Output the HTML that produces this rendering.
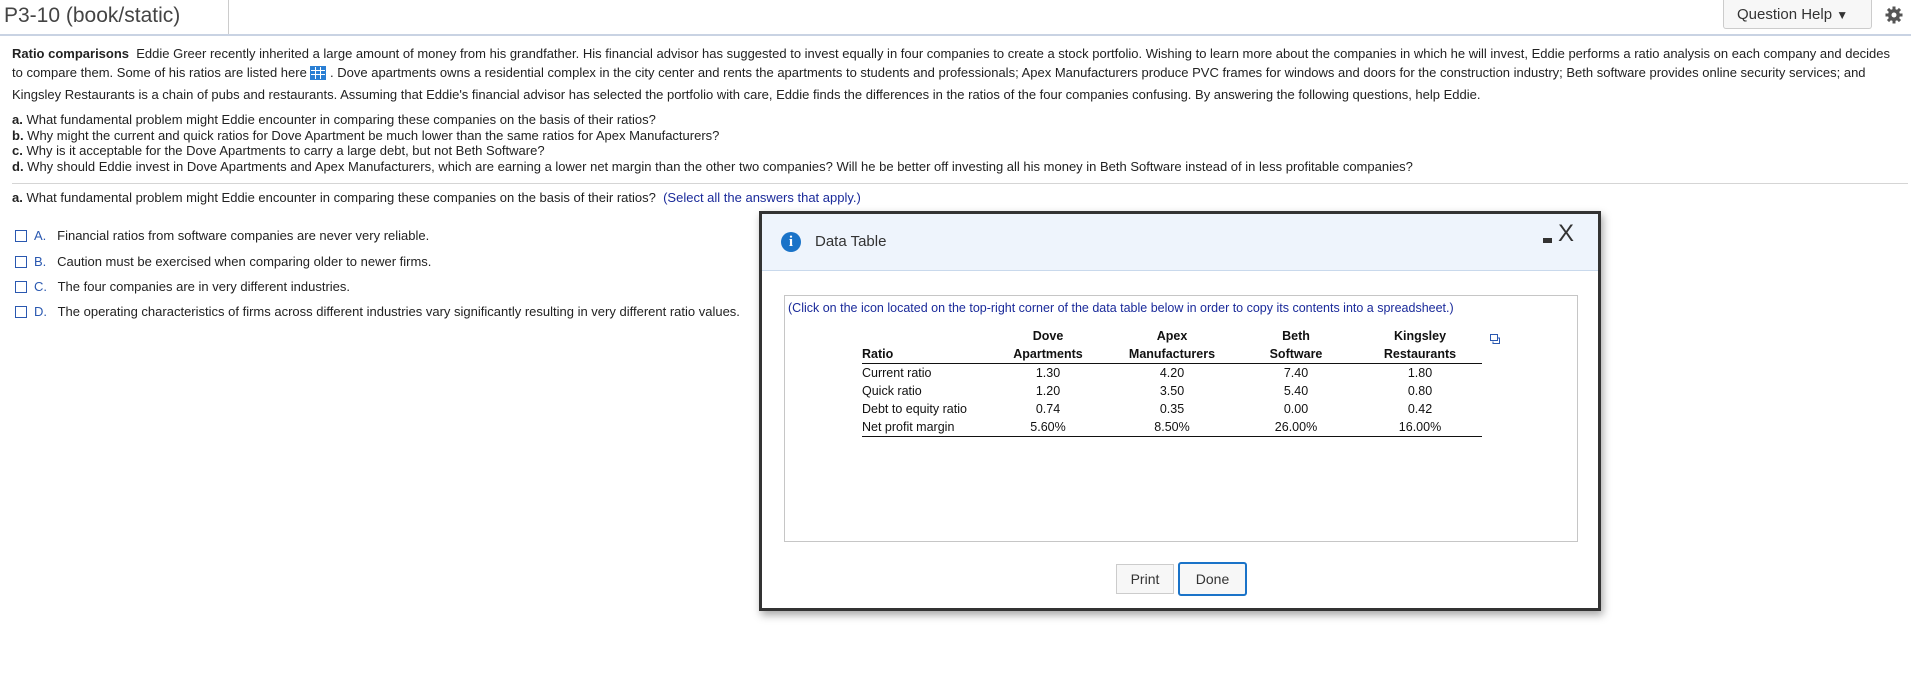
<!DOCTYPE html>
<html><head><meta charset="utf-8"><style>
*{margin:0;padding:0;box-sizing:border-box}
body{width:1911px;height:689px;background:#fff;font-family:"Liberation Sans",Arial,sans-serif;color:#222;position:relative;overflow:hidden;font-size:13px}
.a{position:absolute;white-space:nowrap}
b{font-weight:bold}
.hdr{position:absolute;left:0;top:34px;width:1911px;height:2px;background:#c9d3e3}
.sep{position:absolute;left:12px;width:1896px;height:1px;background:#d5d5d5}
.cb{position:absolute;left:15px;width:12px;height:12px;border:1px solid #2a58b0}
.lt{color:#2a58b0}
.modal{position:absolute;left:759px;top:211px;width:842px;height:400px;border:3px solid #333;background:#fff;box-shadow:2px 4px 8px rgba(0,0,0,.35)}
.mh{position:absolute;left:0;top:0;width:836px;height:57px;background:#eef4fc;border-bottom:1px solid #c9d9ec}
.box{position:absolute;left:22px;top:81px;width:794px;height:247px;border:1px solid #c6c6c6}
table{position:absolute;left:77px;top:31px;border-collapse:collapse;font-size:12.5px;color:#111}
td{height:18px;padding:0;line-height:18px;text-align:center}
</style></head><body>
<div class="a" style="left:4px;top:4px;font-size:21px;color:#444">P3-10 (book/static)</div>
<div style="position:absolute;left:228px;top:0;width:1px;height:34px;background:#ccc"></div>
<div class="hdr"></div>
<div style="position:absolute;left:1723px;top:0;width:149px;height:29px;border:1px solid #ccc;border-top:none;border-radius:0 0 3px 3px;background:#f7f7f7;font-size:15px;color:#333;line-height:29px;padding-left:13px">Question Help <span style="font-size:12px">▼</span></div>
<svg class="a" style="left:1885px;top:6px" width="18" height="18" viewBox="0 0 18 18"><g fill="#555"><circle cx="9" cy="9" r="6"/><rect x="7.5" y="0.5" width="3" height="17"/><rect x="0.5" y="7.5" width="17" height="3"/><rect x="7.5" y="0.5" width="3" height="17" transform="rotate(45 9 9)"/><rect x="7.5" y="0.5" width="3" height="17" transform="rotate(-45 9 9)"/></g><circle cx="9" cy="9" r="2.5" fill="#fff"/></svg>

<div class="a" style="left:12px;top:46px"><b>Ratio comparisons</b>&nbsp; Eddie Greer recently inherited a large amount of money from his grandfather. His financial advisor has suggested to invest equally in four companies to create a stock portfolio. Wishing to learn more about the companies in which he will invest, Eddie performs a ratio analysis on each company and decides</div>
<div class="a" style="left:12px;top:65px">to compare them. Some of his ratios are listed here <span style="display:inline-block;width:16px;height:14px;vertical-align:-3px;background:#2a7fd4;border:1px solid #2a7fd4;background-image:linear-gradient(90deg,transparent 4px,#fff 4px,#fff 5px,transparent 5px,transparent 9px,#fff 9px,#fff 10px,transparent 10px),linear-gradient(transparent 3px,#fff 3px,#fff 4px,transparent 4px,transparent 7px,#fff 7px,#fff 8px,transparent 8px)"></span> . Dove apartments owns a residential complex in the city center and rents the apartments to students and professionals; Apex Manufacturers produce PVC frames for windows and doors for the construction industry; Beth software provides online security services; and</div>
<div class="a" style="left:12px;top:87px">Kingsley Restaurants is a chain of pubs and restaurants. Assuming that Eddie's financial advisor has selected the portfolio with care, Eddie finds the differences in the ratios of the four companies confusing. By answering the following questions, help Eddie.</div>
<div class="a" style="left:12px;top:112px"><b>a.</b> What fundamental problem might Eddie encounter in comparing these companies on the basis of their ratios?</div>
<div class="a" style="left:12px;top:128px"><b>b.</b> Why might the current and quick ratios for Dove Apartment be much lower than the same ratios for Apex Manufacturers?</div>
<div class="a" style="left:12px;top:143px"><b>c.</b> Why is it acceptable for the Dove Apartments to carry a large debt, but not Beth Software?</div>
<div class="a" style="left:12px;top:159px"><b>d.</b> Why should Eddie invest in Dove Apartments and Apex Manufacturers, which are earning a lower net margin than the other two companies? Will he be better off investing all his money in Beth Software instead of in less profitable companies?</div>
<div class="sep" style="top:183px"></div>
<div class="a" style="left:12px;top:190px"><b>a.</b> What fundamental problem might Eddie encounter in comparing these companies on the basis of their ratios?&nbsp; <span style="color:#1a2a9a">(Select all the answers that apply.)</span></div>

<div class="cb" style="top:230px"></div><div class="a" style="left:34px;top:228px"><span class="lt">A.</span>&nbsp;&nbsp; Financial ratios from software companies are never very reliable.</div>
<div class="cb" style="top:256px"></div><div class="a" style="left:34px;top:254px"><span class="lt">B.</span>&nbsp;&nbsp; Caution must be exercised when comparing older to newer firms.</div>
<div class="cb" style="top:281px"></div><div class="a" style="left:34px;top:279px"><span class="lt">C.</span>&nbsp;&nbsp; The four companies are in very different industries.</div>
<div class="cb" style="top:306px"></div><div class="a" style="left:34px;top:304px"><span class="lt">D.</span>&nbsp;&nbsp; The operating characteristics of firms across different industries vary significantly resulting in very different ratio values.</div>

<div class="modal">
 <div class="mh">
  <div class="a" style="left:19px;top:18px;width:20px;height:20px;border-radius:50%;background:#1a73c8;color:#fff;font:bold 15px 'Liberation Serif',serif;text-align:center;line-height:20px">i</div>
  <div class="a" style="left:53px;top:19px;font-size:15px;color:#333">Data Table</div>
  <div class="a" style="left:781px;top:24px;width:9px;height:5px;background:#333"></div>
  <div class="a" style="left:796px;top:6px;font-size:24px;color:#333">X</div>
 </div>
 <div class="box">
  <div class="a" style="left:3px;top:5px;font-size:12.5px;color:#1a2a9a">(Click on the icon located on the top-right corner of the data table below in order to copy its contents into a spreadsheet.)</div>
  <svg class="a" style="left:705px;top:38px" width="10" height="10"><rect x="0.5" y="0.5" width="7" height="6" fill="none" stroke="#2a58b0"/><path d="M3 7.5V9.5H9.5V4H8" fill="none" stroke="#2a58b0"/></svg>
  <table>
   <tr style="font-weight:bold"><td style="width:124px"></td><td style="width:124px">Dove</td><td style="width:124px">Apex</td><td style="width:124px">Beth</td><td style="width:124px">Kingsley</td></tr>
   <tr style="font-weight:bold;border-bottom:1.5px solid #111"><td style="text-align:left">Ratio</td><td>Apartments</td><td>Manufacturers</td><td>Software</td><td>Restaurants</td></tr>
   <tr><td style="text-align:left">Current ratio</td><td>1.30</td><td>4.20</td><td>7.40</td><td>1.80</td></tr>
   <tr><td style="text-align:left">Quick ratio</td><td>1.20</td><td>3.50</td><td>5.40</td><td>0.80</td></tr>
   <tr><td style="text-align:left">Debt to equity ratio</td><td>0.74</td><td>0.35</td><td>0.00</td><td>0.42</td></tr>
   <tr style="border-bottom:1.5px solid #111"><td style="text-align:left">Net profit margin</td><td>5.60%</td><td>8.50%</td><td>26.00%</td><td>16.00%</td></tr>
  </table>
 </div>
 <div class="a" style="left:354px;top:350px;width:58px;height:30px;border:1px solid #ccc;background:#f7f7f7;font-size:14px;color:#333;text-align:center;line-height:28px">Print</div>
 <div class="a" style="left:416px;top:348px;width:69px;height:34px;border:2px solid #1a73c8;border-radius:3px;background:#f7f7f7;font-size:14px;color:#333;text-align:center;line-height:30px">Done</div>
</div>
</body></html>
